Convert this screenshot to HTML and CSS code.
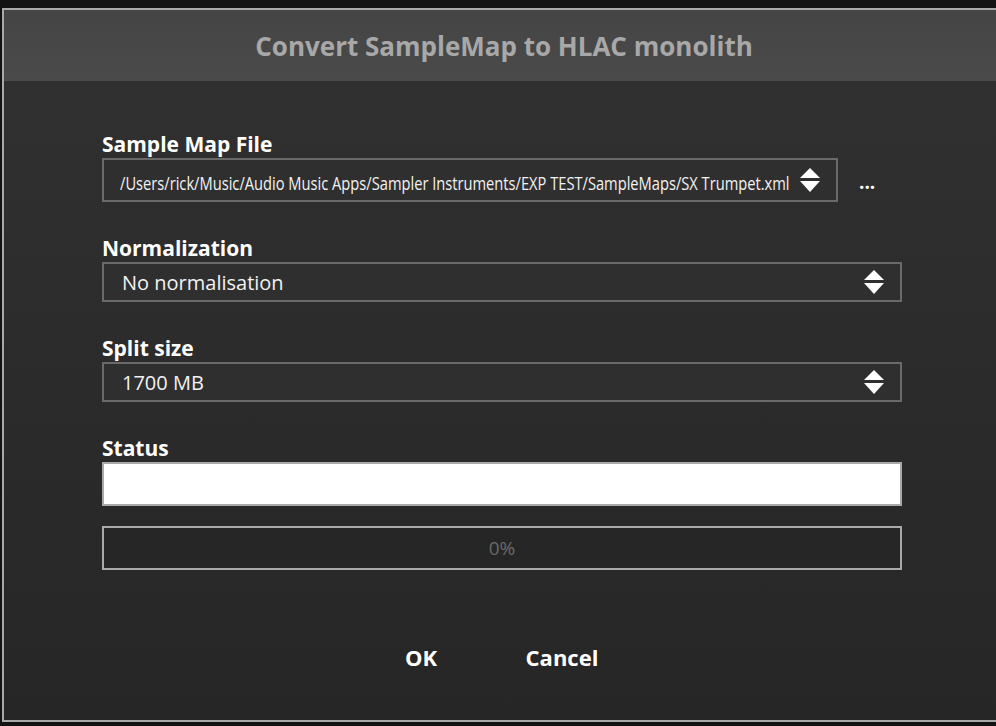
FILE: index.html
```html
<!DOCTYPE html>
<html>
<head>
<meta charset="utf-8">
<link rel="stylesheet" href="styles.css">
</head>
<body>
<div class="dialog">
  <div class="titlebar">Convert SampleMap to HLAC monolith</div>
  <div class="content">
    <div class="field">
      <div class="label">Sample Map File</div>
      <div class="file-row">
        <div class="combo combo-file">
          <div class="path-wrap"><span class="squeezed">/Users/rick/Music/Audio Music Apps/Sampler Instruments/EXP TEST/SampleMaps/SX Trumpet.xml</span></div>
          <svg class="arrows" width="20" height="24" viewBox="0 0 20 24"><polygon points="10,0 20,10 0,10" fill="#fff"/><polygon points="0,13 20,13 10,24" fill="#fff"/></svg>
        </div>
        <div class="dots">...</div>
      </div>
    </div>
    <div class="field spaced">
      <div class="label">Normalization</div>
      <div class="combo combo-wide">
        <span class="combo-text">No normalisation</span>
        <svg class="arrows" width="20" height="24" viewBox="0 0 20 24"><polygon points="10,0 20,10 0,10" fill="#fff"/><polygon points="0,13 20,13 10,24" fill="#fff"/></svg>
      </div>
    </div>
    <div class="field spaced">
      <div class="label">Split size</div>
      <div class="combo combo-wide">
        <span class="combo-text">1700 MB</span>
        <svg class="arrows" width="20" height="24" viewBox="0 0 20 24"><polygon points="10,0 20,10 0,10" fill="#fff"/><polygon points="0,13 20,13 10,24" fill="#fff"/></svg>
      </div>
    </div>
    <div class="field spaced">
      <div class="label">Status</div>
      <div class="status"></div>
    </div>
    <div class="progress">0%</div>
    <div class="buttons">
      <div class="btn">OK</div>
      <div class="btn">Cancel</div>
    </div>
  </div>
</div>
</body>
</html>
```
FILE: styles.css
```css
html, body {
  margin: 0;
  padding: 0;
}
body {
  width: 996px;
  height: 726px;
  overflow: hidden;
  background: #131313;
  font-family: "Open Sans", Lato, sans-serif;
}
.dialog {
  margin-top: 8px;
  margin-left: 2px;
  width: 1000px;
  border: 2px solid #a9a9a9;
  display: flex;
  flex-direction: column;
}
.titlebar {
  height: 71px;
  background: linear-gradient(#454545, #4a4a4a);
  color: #a8a8a8;
  font-weight: 700;
  font-size: 26px;
  display: flex;
  align-items: center;
  justify-content: center;
}
.content {
  height: 639px;
  background: linear-gradient(#303030, #262626);
  padding: 51px 0 0 98px;
  box-sizing: border-box;
  display: flex;
  flex-direction: column;
}
.field {
  display: flex;
  flex-direction: column;
  gap: 2px;
}
.spaced {
  margin-top: 34px;
}
.label {
  height: 24px;
  line-height: 24px;
  color: #fff;
  font-weight: 700;
  font-size: 21px;
}
.file-row {
  display: flex;
  align-items: center;
}
.combo {
  border: 2px solid #6a6a6a;
  background: #2f2f2f;
  display: flex;
  align-items: center;
  box-sizing: border-box;
  padding: 0 16px 0 18px;
  color: #f2f2f2;
  font-size: 20px;
}
.combo-file {
  width: 736px;
  height: 44px;
  padding-left: 16px;
}
.combo-wide {
  width: 800px;
  height: 40px;
}
.combo-text {
  flex: 1;
  white-space: nowrap;
}
.path-wrap {
  flex: 1;
  min-width: 0;
  padding-top: 4px;
}
.squeezed {
  display: inline-block;
  white-space: nowrap;
  font-size: 18px;
  transform: scaleX(0.815);
  transform-origin: 0 50%;
}
.arrows {
  flex: 0 0 auto;
}
.dots {
  margin-left: 21px;
  color: #fff;
  font-weight: 700;
  font-size: 19px;
  padding-top: 4px;
}
.status {
  width: 800px;
  height: 44px;
  box-sizing: border-box;
  background: #fff;
  border: 2px solid #a9a9a9;
}
.progress {
  margin-top: 20px;
  width: 800px;
  height: 44px;
  box-sizing: border-box;
  background: #262626;
  border: 2px solid #a9a9a9;
  color: #6a6a6a;
  font-size: 19px;
  display: flex;
  align-items: center;
  justify-content: center;
}
.buttons {
  margin-top: 75px;
  margin-left: 269px;
  display: flex;
  gap: 41px;
}
.btn {
  width: 100px;
  height: 24px;
  line-height: 24px;
  text-align: center;
  color: #fff;
  font-weight: 700;
  font-size: 22px;
}
```
